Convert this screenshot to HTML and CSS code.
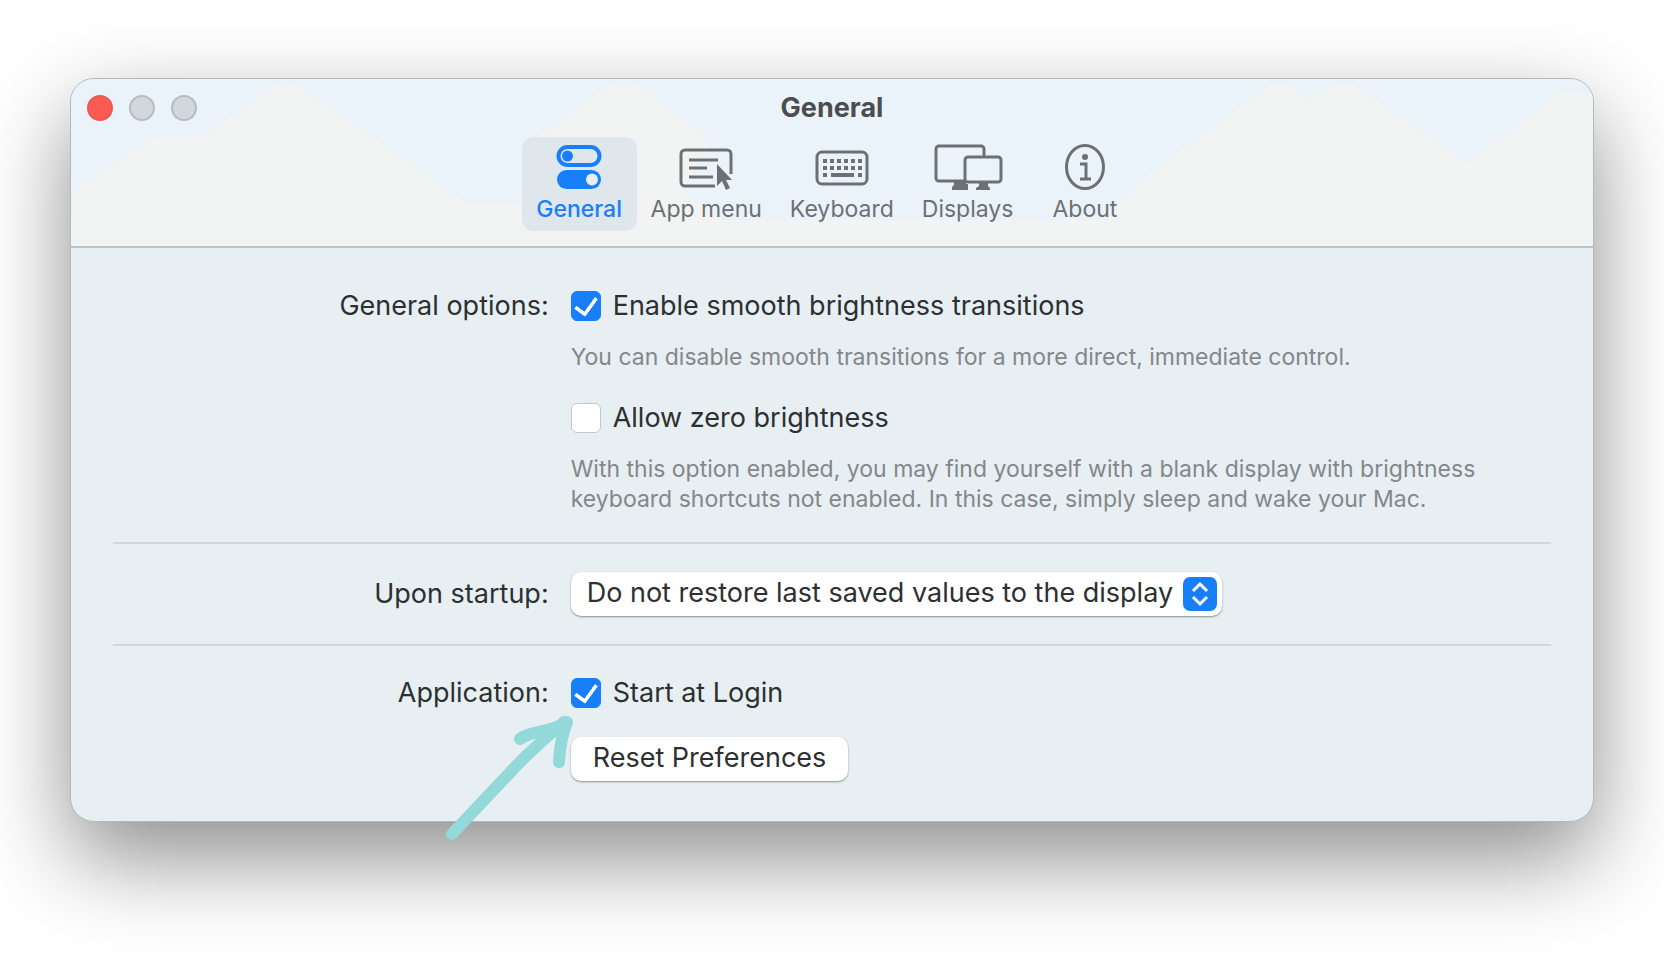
FILE: index.html
```html
<!DOCTYPE html>
<html lang="en">
  <head>
    <meta charset="UTF-8" />
    <meta name="viewport" content="width=device-width, initial-scale=1.0" />
    <title>General</title>
    <link rel="stylesheet" href="styles.css">
  </head>
  <body>
    <main class="window">
      <header class="header">
        <svg class="header-bg" viewBox="0 0 1522 168" preserveAspectRatio="none">
          <path d="M0 114 84 58H132L204 6Q212 1 220 4L240 16 397 126H455L466 58 540 5Q553 0 565 5L640 62 612 112 650 142H1036L1060 109 1200 6Q1210 1 1219 5L1238 22 1262 6Q1272 1 1282 6L1396 84 1474 26 1484 14H1522V168H0Z" />
        </svg>
        <div class="titlebar">
          <div class="lights">
            <button class="light close" aria-label="Close"></button>
            <button class="light" aria-label="Minimize"></button>
            <button class="light" aria-label="Zoom"></button>
          </div>
          <h1>General</h1>
        </div>
        <nav class="tabs">
          <button class="tab active">
            <svg width="46" height="46" viewBox="0 0 46 46">
              <rect x="2.500" y="3" width="41" height="18" rx="9" fill="none" stroke="currentColor" stroke-width="4" />
              <circle cx="11.500" cy="12" r="5.500" fill="currentColor" />
              <rect x="1" y="26" width="44" height="19" rx="9.500" fill="currentColor" />
              <circle cx="36" cy="35.500" r="6" fill="#e9eff5" />
            </svg>
            <span>General</span>
          </button>
          <button class="tab">
            <svg width="54" height="46" viewBox="0 0 54 46">
              <path d="M36 42H6a4 4 0 0 1-4-4V10a4 4 0 0 1 4-4h42a4 4 0 0 1 4 4v20M10 16h29M10 24h18M10 33h24" fill="none" stroke="currentColor" stroke-width="3" />
              <path d="M38 20v22l5-5 4 9 4-2-4-8h6z" fill="currentColor" />
            </svg>
            <span>App menu</span>
          </button>
          <button class="tab">
            <svg width="54" height="46" viewBox="0 0 54 46">
              <rect x="2" y="8" width="50" height="32" rx="5" fill="none" stroke="currentColor" stroke-width="3" />
              <path d="M8 17h40M8 24h40" stroke="currentColor" stroke-width="4" stroke-dasharray="4 3" />
              <path d="M8 31h4M16 31h23M43 31h4" stroke="currentColor" stroke-width="4" />
            </svg>
            <span>Keyboard</span>
          </button>
          <button class="tab">
            <svg width="70" height="46" viewBox="0 0 70 46">
              <path d="M31 37H6a3 3 0 0 1-3-3V5a3 3 0 0 1 3-3h42a3 3 0 0 1 3 3v9" fill="none" stroke="currentColor" stroke-width="3" />
              <rect x="32" y="13" width="36" height="25" rx="3" fill="none" stroke="currentColor" stroke-width="3" />
              <path d="M21 37h12v3h2v6H19v-3l2-2zM46 39h9v3l2 2v2H43v-2l3-2z" fill="currentColor" />
            </svg>
            <span>Displays</span>
          </button>
          <button class="tab">
            <svg width="42" height="46" viewBox="0 0 42 46">
              <ellipse cx="21" cy="23" rx="18.500" ry="21.500" fill="none" stroke="currentColor" stroke-width="3" />
              <circle cx="21" cy="13" r="3" fill="currentColor" />
              <path d="M16 20h6v14M16 35h11" fill="none" stroke="currentColor" stroke-width="3" />
            </svg>
            <span>About</span>
          </button>
        </nav>
      </header>

      <form class="settings">
        <section class="row">
          <span class="label">General options:</span>
          <div class="fields">
            <label class="check"><input type="checkbox" checked /> Enable smooth brightness transitions</label>
            <p class="hint">You can disable smooth transitions for a more direct, immediate control.</p>
            <label class="check"><input type="checkbox" /> Allow zero brightness</label>
            <p class="hint">With this option enabled, you may find yourself with a blank display with brightness<br />keyboard shortcuts not enabled. In this case, simply sleep and wake your Mac.</p>
          </div>
        </section>
        <hr />
        <section class="row centered">
          <label class="label" for="startup">Upon startup:</label>
          <div class="select">
            <select id="startup">
              <option>Do not restore last saved values to the display</option>
            </select>
            <svg class="stepper" viewBox="0 0 34 34">
              <rect width="34" height="34" rx="7" />
              <path d="M10 14l7-7 7 7M10 20l7 7 7-7" />
            </svg>
          </div>
        </section>
        <hr />
        <section class="row">
          <span class="label">Application:</span>
          <div class="fields application">
            <label class="check"><input type="checkbox" checked /> Start at Login</label>
            <button type="button" class="reset">Reset Preferences</button>
            <svg class="arrow" viewBox="0 0 130 126">
              <path d="M7 119 75 47Q92 30 119 7M75 24C86 15 105 18 122 7Q115 25 114 47" />
            </svg>
          </div>
        </section>
      </form>
    </main>
  </body>
</html>
```

FILE: styles.css
```css
* {
  margin: 0;
  padding: 0;
  box-sizing: border-box;
}

body {
  padding: 78px 70px 142px;
  background-color: #fff;
  color: #2d3030;
  font-family: Inter, "Liberation Sans", sans-serif;
  font-size: 27px;
  line-height: 32px;
  overflow: hidden;
}

button,
select {
  font: inherit;
  color: inherit;
  border: none;
}

.window {
  border: 1px solid #b4b8ba;
  border-radius: 24px;
  background-color: #e7eff3;
  box-shadow: 0 36px 90px rgba(0, 0, 0, 0.45);
}

.header {
  position: relative;
  height: 169px;
  border-bottom: 2px solid #bcc3ca;
  border-radius: 23px 23px 0 0;
  background-color: #ebf3fa;
  overflow: hidden;
}

.header-bg {
  position: absolute;
  inset: 0;
  width: 100%;
  height: 100%;
  fill: #f2f3f3;
}

.titlebar {
  position: relative;
  display: grid;
  grid-template-columns: 1fr auto 1fr;
  align-items: center;
  height: 58px;
}

.titlebar h1 {
  font-size: 27px;
  font-weight: 700;
  color: #4b4e50;
}

.lights {
  display: flex;
  gap: 16px;
  padding-left: 16px;
}

.light {
  width: 26px;
  height: 26px;
  border: 2px solid #b9bcbf;
  border-radius: 50%;
  background-color: #d0d7dd;
}

.light.close {
  border-color: #ef5750;
  background-color: #fc5b54;
}

.tabs {
  position: relative;
  display: flex;
  justify-content: center;
}

.tab {
  display: flex;
  flex-direction: column;
  align-items: center;
  gap: 4px;
  min-width: 115px;
  height: 94px;
  padding: 7px 14px;
  border-radius: 12px;
  background: none;
  color: #6c7072;
  font-size: 23px;
  line-height: 30px;
}

.tab.active {
  background-color: #dfe6ec;
  color: #187ffb;
  font-weight: 500;
}

.settings {
  padding: 42px 42px 40px;
}

.row {
  display: grid;
  grid-template-columns: 4fr 9fr;
  gap: 22px;
}

.row.centered {
  align-items: center;
}

.label {
  text-align: right;
}

.fields {
  display: flex;
  flex-direction: column;
  align-items: flex-start;
}

.check {
  display: flex;
  align-items: center;
  gap: 12px;
}

.check input {
  appearance: none;
  display: grid;
  place-items: center;
  width: 30px;
  height: 30px;
  border: 1px solid #c4c8ca;
  border-radius: 6px;
  background-color: #fff;
}

.check input:checked {
  border-color: #187ffb;
  background-color: #187ffb;
}

.check input:checked::before {
  content: "";
  width: 10px;
  height: 18px;
  margin-bottom: 4px;
  border: solid #fff;
  border-width: 0 4px 4px 0;
  border-radius: 1px;
  transform: rotate(36deg);
}

.hint {
  margin: 20px 0 30px;
  color: #838789;
  font-size: 23px;
  line-height: 30px;
}

.hint:last-child {
  margin-bottom: 28px;
}

hr {
  height: 2px;
  border: none;
  background-color: #d1d7db;
}

.row.centered {
  margin: 28px 0;
}

hr + .row:last-child {
  margin-top: 31px;
}

.select {
  position: relative;
  justify-self: start;
}

.select select,
.reset {
  height: 44px;
  border-radius: 10px;
  background-color: #fff;
  box-shadow: 0 1px 2px rgba(0, 0, 0, 0.4);
}

.select select {
  appearance: none;
  padding: 0 48px 2px 16px;
}

.stepper {
  position: absolute;
  top: 5px;
  right: 5px;
  width: 34px;
  height: 34px;
  fill: #187ffb;
  pointer-events: none;
}

.stepper path {
  fill: none;
  stroke: #fff;
  stroke-width: 3;
}

.application {
  position: relative;
  gap: 28px;
}

.reset {
  padding: 0 22px 2px;
}

.arrow {
  position: absolute;
  top: 38px;
  right: calc(100% - 4px);
  width: 130px;
  height: 126px;
  fill: none;
  stroke: #93d9d9;
  stroke-width: 12;
  stroke-linecap: round;
  stroke-linejoin: round;
  pointer-events: none;
}
```
